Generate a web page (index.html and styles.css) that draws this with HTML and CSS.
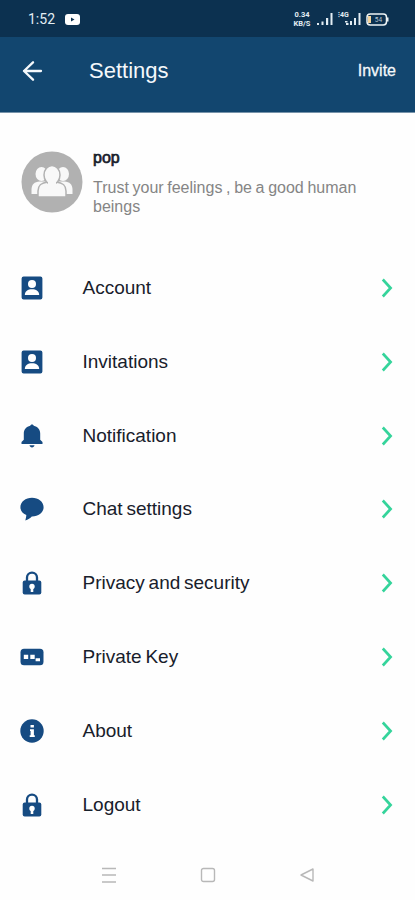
FILE: index.html
```html
<!DOCTYPE html>
<html lang="en">
<head>
<meta charset="utf-8">
<title>Settings</title>
<link rel="stylesheet" href="styles.css">
</head>
<body>
<svg class="defs" width="0" height="0">
  <symbol id="account" viewBox="0 0 24 24"><path fill="#164b82" d="M3.600.4h16.800a2 2 0 0 1 2 2v19.200a2 2 0 0 1-2 2H3.600a2 2 0 0 1-2-2V2.400a2 2 0 0 1 2-2z"/><circle cx="12" cy="8" r="4" fill="#fff"/><path fill="#fff" d="M4.800 19c0-3.800 3.200-5.800 7.200-5.800s7.200 2 7.200 5.800z"/></symbol>
  <symbol id="bell" viewBox="0 0 24 24"><path fill="#164b82" d="M12 .5c-1 0-1.700.7-1.700 1.300C6.300 2.600 3.800 5.700 3.800 9.500v6.300L1.500 18v1.900h21V18l-2.300-2.200V9.500c0-3.800-2.500-6.900-6.500-7.700 0-.6-.7-1.300-1.700-1.300zM9.500 21.300h5c-.3 1.300-1.200 2.200-2.500 2.200s-2.200-.9-2.500-2.200z"/></symbol>
  <symbol id="chat" viewBox="0 0 24 24"><path fill="#164b82" d="M12 .8C5.600.8.4 4.900.4 10.200c0 3.500 2.200 6.300 5.900 7.900-.1 1.700-.3 3.200-1 5.300 2.800-.8 5-2.300 6.500-4 6.900.1 11.800-4 11.800-9.200C23.600 4.900 18.400.8 12 .8z"/></symbol>
  <symbol id="lock" viewBox="0 0 24 24"><path fill="none" stroke="#164b82" stroke-width="2.300" d="M7 11V6.600a5 5 0 0 1 10 0V11"/><rect x="2.700" y="9.500" width="18.600" height="14" rx="2" fill="#164b82"/><circle cx="12" cy="15.400" r="2.700" fill="#fff"/><path fill="#fff" d="M10.700 15h2.600v6h-2.600z"/></symbol>
  <symbol id="key" viewBox="0 0 24 24"><rect x=".5" y="3.700" width="23" height="16.600" rx="3.500" fill="#164b82"/><path fill="#fff" d="M3.800 9.700h4.400v4.400H3.800zM10.300 9.700h4.400v4.400h-4.400zM15.600 13.200h4.400v3h-4.400z"/></symbol>
  <symbol id="info" viewBox="0 0 24 24"><circle cx="12" cy="12" r="11.700" fill="#164b82"/><path fill="#fff" d="M10.500 6h3.400v2.600h-3.400zM10 10.200h3.900v6h.9V18H9.700v-1.800h.9v-4.200H10z"/></symbol>
  <symbol id="next" viewBox="0 0 12 20"><path fill="none" stroke="#35d49b" stroke-width="2.700" d="M1.800 1.500 9.600 10l-7.800 8.500"/></symbol>
</svg>
<div class="status">
  <span class="clock">1:52</span>
  <svg class="video" viewBox="0 0 15 11"><rect width="15" height="11" rx="3" fill="#fff"/><path fill="#0c3150" d="M6 3.500v4l3.500-2z"/></svg>
  <span class="speed"><span>0.34</span><span>KB/S</span></span>
  <svg class="signal" viewBox="0 0 16 12" fill="#e3edf3"><path d="M0 10h2v2H0zM4.500 8.500h2V12h-2zM9 5h2.200v7H9zM13.500 0h2v12h-2z"/></svg>
  <span class="mobile"><span class="network">⁝4G</span><svg class="signal bars" viewBox="0 0 16 12" fill="#e3edf3"><path d="M0 8h2.500v1.500H0zM1 10h2.500v2H1zM5 8h2v4H5zM9 5h2v7H9zM13.500 0h2v12h-2z"/></svg></span>
  <svg class="battery" viewBox="0 0 23 13"><rect x="1" y="1" width="19.500" height="11" rx="3.200" fill="none" stroke="#edf3f5" stroke-width="1.500"/><path fill="#f4d29a" d="M2 3h3v7H2z"/><path fill="#edf3f5" d="M21 4.500h1.500v4H21z"/><text x="12.500" y="9.300" text-anchor="middle">54</text></svg>
</div>
<header>
  <svg class="back" viewBox="0 0 20 20"><path fill="none" stroke="#f4f8fb" stroke-width="2.300" stroke-linecap="round" stroke-linejoin="round" d="M18.500 10H1.500M10.500 1.300 1.500 10l9 8.700"/></svg>
  <h1>Settings</h1>
  <span class="invite">Invite</span>
</header>
<section class="profile">
  <svg class="avatar" viewBox="0 0 62 62"><circle cx="31" cy="31" r="30.500" fill="#b1b1b1"/><g fill="#f8f8f8"><ellipse cx="20.500" cy="23" rx="6" ry="7"/><ellipse cx="42" cy="23" rx="6" ry="7"/><path d="M10.500 43v-4c0-6 3-8 8-8.500h25c5 .5 8 2.500 8 8.500v4z"/></g><g fill="#f8f8f8" stroke="#b1b1b1" stroke-width="1.500"><path d="M17 46v-6c0-6 3.200-8.200 10-9h8c6.800.8 10 3 10 9v6z"/><ellipse cx="31" cy="24" rx="8" ry="9.500"/></g><path fill="#f8f8f8" d="M27 29h8v6h-8z"/></svg>
  <div class="about"><h2>pop</h2><p>Trust your feelings , be a good human beings</p></div>
</section>
<main>
  <div class="row"><svg class="icon"><use href="#account"/></svg><span>Account</span><svg class="next"><use href="#next"/></svg></div>
  <div class="row"><svg class="icon"><use href="#account"/></svg><span>Invitations</span><svg class="next"><use href="#next"/></svg></div>
  <div class="row"><svg class="icon"><use href="#bell"/></svg><span>Notification</span><svg class="next"><use href="#next"/></svg></div>
  <div class="row"><svg class="icon"><use href="#chat"/></svg><span>Chat settings</span><svg class="next"><use href="#next"/></svg></div>
  <div class="row"><svg class="icon"><use href="#lock"/></svg><span>Privacy and security</span><svg class="next"><use href="#next"/></svg></div>
  <div class="row"><svg class="icon"><use href="#key"/></svg><span>Private Key</span><svg class="next"><use href="#next"/></svg></div>
  <div class="row"><svg class="icon"><use href="#info"/></svg><span>About</span><svg class="next"><use href="#next"/></svg></div>
  <div class="row"><svg class="icon"><use href="#lock"/></svg><span>Logout</span><svg class="next"><use href="#next"/></svg></div>
</main>
<nav>
  <svg viewBox="0 0 16 16"><path d="M1 1.500h14M1 8h14M1 15h14"/></svg>
  <svg viewBox="0 0 16 16"><rect x="1.500" y="1.500" width="13" height="13" rx="2"/></svg>
  <svg viewBox="0 0 16 16"><path d="M14 2v12L2 8z" stroke-linejoin="round"/></svg>
</nav>
</body>
</html>
```
FILE: styles.css
```css
* { box-sizing: border-box; }
body {
  margin: 0;
  width: 415px;
  height: 900px;
  overflow: hidden;
  background: #fefefe;
  color: #18202b;
  font-family: "Liberation Sans", Arial, sans-serif;
}
svg { display: block; flex: none; }
h1, h2, p { margin: 0; font-weight: 400; }
.defs { display: none; }
.status {
  height: 37px;
  padding: 1px 26px 0 28px;
  display: flex;
  align-items: center;
  background: #0c3150;
  color: #e3edf3;
}
.clock { width: 37px; font: 14px Roboto, sans-serif; }
.video { width: 15px; height: 11px; }
.speed {
  display: flex;
  flex-direction: column;
  width: 20px;
  margin-left: auto;
  margin-right: 5px;
  font: bold 7.500px/9px Roboto, sans-serif;
  text-align: center;
}
.speed span { height: 9px; }
.signal { width: 16px; height: 12px; }
.mobile { display: flex; width: 23px; height: 14px; margin: 0 5px; position: relative; align-items: center; }
.network { position: absolute; left: 0; top: 0; font: bold 7px/7px Roboto, sans-serif; }
.bars { margin-left: 7px; }
.battery { width: 23px; height: 13px; }
.battery text { font: 6.500px Roboto, sans-serif; fill: #b9cad5; }
header {
  height: 76px;
  padding: 0 19px 8px 22px;
  display: flex;
  align-items: center;
  background: #12466f;
  border-bottom: 1px solid #7793aa;
  color: #f4f8fb;
}
.back { width: 21px; height: 20px; }
h1 { margin-left: 46px; font-size: 22px; line-height: 26px; padding-top: 1px; }
.invite { margin-left: auto; font-size: 16px; -webkit-text-stroke: .3px currentColor; }
.profile { display: flex; height: 138px; padding: 38px 40px 0 21px; }
.avatar { width: 62px; height: 62px; }
.about { margin-left: 10px; flex: 1; }
h2 { font-size: 16px; line-height: 18px; margin-top: -2px; -webkit-text-stroke: .7px currentColor; }
p { margin-top: 12px; font-size: 16px; line-height: 18.500px; word-spacing: -.8px; color: #858585; }
.row { display: flex; align-items: center; height: 73.850px; padding: 0 22px 0 20px; }
.icon { width: 24px; height: 24px; }
.row span { margin-left: 38.500px; font-size: 19px; line-height: 24px; word-spacing: -1.500px; }
.next { width: 12px; height: 20px; margin-left: auto; }
nav { display: flex; justify-content: space-between; margin: 25px 100px 0 101px; }
nav svg { width: 16px; height: 16px; fill: none; stroke: #b8b8b8; stroke-width: 1.400; }
```
